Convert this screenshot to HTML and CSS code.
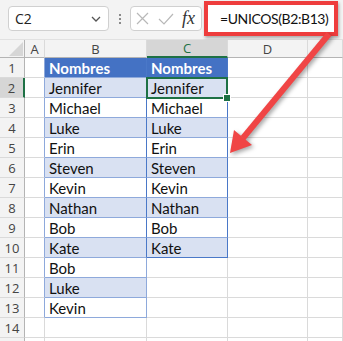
FILE: index.html
```html
<!DOCTYPE html>
<html lang="es">
<head>
    <meta charset="UTF-8">
    <title>UNICOS</title>
    <link rel="stylesheet" href="styles.css">
</head>
<body>
    <div class="bar">
        <div class="namebox">
            <span>C2</span>
            <svg width="10" height="6" viewBox="0 0 10 6"><path d="M1 1l4 4 4-4" fill="none" stroke="#555" stroke-width="1.3"/></svg>
        </div>
        <div class="grip"><i></i><i></i><i></i></div>
        <div class="fxbox">
            <svg width="13" height="13" viewBox="0 0 13 13"><path d="M1 1l11 11M12 1L1 12" stroke="#b8b8b8" stroke-width="1.2"/></svg>
            <svg width="16" height="12" viewBox="0 0 16 12"><path d="M1 6l5 5L15 1" fill="none" stroke="#b8b8b8" stroke-width="1.2"/></svg>
            <span class="fx">fx</span>
        </div>
        <div class="formula">=UNICOS(B2:B13)</div>
    </div>

    <div class="sheet">
        <div class="row head">
            <div class="c rh corner"><svg width="14" height="14" viewBox="0 0 14 14"><path d="M14 0V14H0z" fill="#d6d6d6"/></svg></div>
            <div class="c a">A</div>
            <div class="c b">B</div>
            <div class="c cc on">C</div>
            <div class="c d">D</div>
            <div class="c e"></div>
        </div>
        <div class="row">
            <div class="c rh">1</div><div class="c a tl"></div>
            <div class="c b t th sp">Nombres</div>
            <div class="c cc t th sp">Nombres</div>
            <div class="c d"></div><div class="c e"></div>
        </div>
        <div class="row">
            <div class="c rh on">2</div><div class="c a tl"></div>
            <div class="c b t z sp">Jennifer</div>
            <div class="c cc t z sp sel">Jennifer</div>
            <div class="c d"></div><div class="c e"></div>
        </div>
        <div class="row">
            <div class="c rh">3</div><div class="c a tl"></div>
            <div class="c b t sp">Michael</div>
            <div class="c cc t sp">Michael</div>
            <div class="c d"></div><div class="c e"></div>
        </div>
        <div class="row">
            <div class="c rh">4</div><div class="c a tl"></div>
            <div class="c b t z sp">Luke</div>
            <div class="c cc t z sp">Luke</div>
            <div class="c d"></div><div class="c e"></div>
        </div>
        <div class="row">
            <div class="c rh">5</div><div class="c a tl"></div>
            <div class="c b t sp">Erin</div>
            <div class="c cc t sp">Erin</div>
            <div class="c d"></div><div class="c e"></div>
        </div>
        <div class="row">
            <div class="c rh">6</div><div class="c a tl"></div>
            <div class="c b t z sp">Steven</div>
            <div class="c cc t z sp">Steven</div>
            <div class="c d"></div><div class="c e"></div>
        </div>
        <div class="row">
            <div class="c rh">7</div><div class="c a tl"></div>
            <div class="c b t sp">Kevin</div>
            <div class="c cc t sp">Kevin</div>
            <div class="c d"></div><div class="c e"></div>
        </div>
        <div class="row">
            <div class="c rh">8</div><div class="c a tl"></div>
            <div class="c b t z sp">Nathan</div>
            <div class="c cc t z sp">Nathan</div>
            <div class="c d"></div><div class="c e"></div>
        </div>
        <div class="row">
            <div class="c rh">9</div><div class="c a tl"></div>
            <div class="c b t sp">Bob</div>
            <div class="c cc t sp">Bob</div>
            <div class="c d"></div><div class="c e"></div>
        </div>
        <div class="row">
            <div class="c rh">10</div><div class="c a tl"></div>
            <div class="c b t z sp">Kate</div>
            <div class="c cc t z sp spb">Kate</div>
            <div class="c d"></div><div class="c e"></div>
        </div>
        <div class="row">
            <div class="c rh">11</div><div class="c a tl"></div>
            <div class="c b t">Bob</div>
            <div class="c cc"></div>
            <div class="c d"></div><div class="c e"></div>
        </div>
        <div class="row">
            <div class="c rh">12</div><div class="c a tl"></div>
            <div class="c b t z">Luke</div>
            <div class="c cc"></div>
            <div class="c d"></div><div class="c e"></div>
        </div>
        <div class="row">
            <div class="c rh">13</div><div class="c a tl"></div>
            <div class="c b t">Kevin</div>
            <div class="c cc"></div>
            <div class="c d"></div><div class="c e"></div>
        </div>
        <div class="row">
            <div class="c rh">14</div><div class="c a"></div>
            <div class="c b"></div>
            <div class="c cc"></div>
            <div class="c d"></div><div class="c e"></div>
        </div>
        <div class="row">
            <div class="c rh"></div><div class="c a"></div>
            <div class="c b"></div>
            <div class="c cc"></div>
            <div class="c d"></div><div class="c e"></div>
        </div>
    </div>

    <!-- flecha roja de la captura -->
    <svg class="arrow" width="343" height="341" viewBox="0 0 343 341">
        <path d="M329 34L243 138" stroke="#f04545" stroke-width="6" stroke-linecap="butt"/>
        <path d="M230 153L234 130L252 145z" fill="#f04545"/>
    </svg>
</body>
</html>
```

FILE: styles.css
```css
*{
    margin: 0;
    padding: 0;
}
body{
    width: 343px;
    height: 341px;
    overflow: hidden;
    position: relative;
    background: #fff;
    font-family: Lato, "Liberation Sans", sans-serif;
}
.bar{
    height: 40px;
    box-sizing: border-box;
    background: #f3f3f3;
    border-bottom: 1px solid #e1e1e1;
    display: flex;
    align-items: flex-start;
    padding: 6px 0 0 8px;
}
.namebox{
    width: 101px;
    height: 25px;
    box-sizing: border-box;
    background: #fff;
    border: 1px solid #d0d0d0;
    border-radius: 4px;
    display: flex;
    align-items: center;
    justify-content: space-between;
    padding: 0 7px 0 6px;
    font: 14px "Open Sans", sans-serif;
    color: #222;
}
.grip{
    width: 21px;
    height: 25px;
    display: flex;
    flex-direction: column;
    align-items: center;
    justify-content: center;
    gap: 2px;
}
.grip i{
    width: 2px;
    height: 2px;
    background: #8a8a8a;
}
.fxbox{
    width: 72px;
    height: 25px;
    box-sizing: border-box;
    background: #fff;
    border: 1px solid #d0d0d0;
    border-radius: 4px;
    display: flex;
    align-items: center;
    gap: 9px;
    padding-left: 5px;
}
.fx{
    font: italic 18px "Liberation Serif", serif;
    color: #333;
    margin-left: -1px;
}
.formula{
    margin: -5px 0 0 2px;
    width: 134px;
    height: 35px;
    box-sizing: border-box;
    background: #fff;
    border: 4px solid #ee3d3d;
    box-shadow: 1px 2px 3px rgba(0,0,0,.3);
    display: flex;
    align-items: center;
    padding-left: 12px;
    font-size: 14px;
    letter-spacing: -0.4px;
    color: #111;
}
.row{
    display: flex;
    height: 20px;
}
.row.head{
    height: 18px;
}
.c{
    box-sizing: border-box;
    height: 100%;
    border-right: 1px solid #dadada;
    border-bottom: 1px solid #dadada;
    display: flex;
    align-items: center;
    padding-left: 4px;
    font-size: 15px;
    color: #111;
    white-space: nowrap;
}
.rh{
    width: 25px;
    flex: none;
    background: #f3f3f3;
    border-right-color: #b4b4b4;
    justify-content: center;
    padding: 0;
    font: 13px "Open Sans", sans-serif;
    color: #444;
}
.a{ width: 20px; flex: none; }
.b{ width: 102px; flex: none; }
.cc{ width: 81px; flex: none; }
.d{ width: 80px; flex: none; }
.e{ flex: 1; }
.head .c{
    background: #f3f3f3;
    border-bottom-color: #b4b4b4;
    justify-content: center;
    padding: 0;
    font: 13px "Open Sans", sans-serif;
    color: #444;
}
.corner{
    align-items: flex-end;
    justify-content: flex-end !important;
    padding: 0 1px 1px 0 !important;
}
.head .on{
    background: #d6d6d6;
    border-bottom: 2px solid #1e7145;
    color: #1e7145;
}
.rh.on{
    background: #d6d6d6;
    border-right: 2px solid #1e7145;
}
.tl{ border-right-color: #8ea9db; }
.t{
    border-bottom-color: #8ea9db;
    border-right-color: #8ea9db;
}
.z{ background: #d9e1f2; }
.th{
    background: #4472c4;
    color: #fff;
    font-weight: bold;
}
.sp{ border-right-color: #4a78c8; }
.spb{ border-bottom-color: #4a78c8; }
.sel{ position: relative; }
.sel::after{
    content: "";
    position: absolute;
    left: -1px;
    top: -1px;
    right: -1px;
    bottom: -2px;
    border: 2px solid #1e7145;
}
.sel::before{
    content: "";
    position: absolute;
    right: -4px;
    bottom: -5px;
    width: 6px;
    height: 6px;
    background: #1e7145;
    border: 1px solid #fff;
    z-index: 1;
}
.arrow{
    position: absolute;
    left: 0;
    top: 0;
    pointer-events: none;
    filter: drop-shadow(2px 2px 2px rgba(0,0,0,.35));
}
```
